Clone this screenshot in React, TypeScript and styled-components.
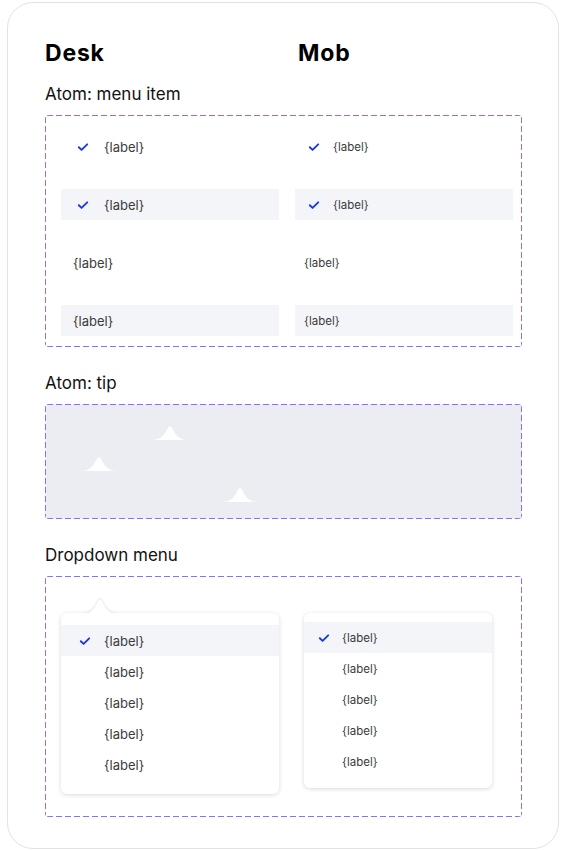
import React from "react";
import styled, { createGlobalStyle } from "styled-components";

const Global = createGlobalStyle`
  html, body { margin: 0; padding: 0; background: #ffffff; }
  body { font-family: Inter, "Open Sans", sans-serif; color: #111; }
`;

const DASH = "#8f6cff";
const dashed = `
  background-image:
    linear-gradient(90deg, ${DASH} 6px, transparent 6px),
    linear-gradient(90deg, ${DASH} 6px, transparent 6px),
    linear-gradient(180deg, ${DASH} 6px, transparent 6px),
    linear-gradient(180deg, ${DASH} 6px, transparent 6px);
  background-size: 9px 1px, 9px 1px, 1px 9px, 1px 9px;
  background-position: 2px 0, 2px 100%, 0 2px, 100% 2px;
  background-repeat: repeat-x, repeat-x, repeat-y, repeat-y;
`;

const Card = styled.div`
  box-sizing: border-box;
  margin: 2px 0 0 7px;
  width: 552px;
  height: 847px;
  border: 1px solid #e2e2ea;
  border-radius: 26px;
  padding: 37px 36px 0 37px;
  display: flex;
  flex-direction: column;
`;

const HeadRow = styled.div`
  display: grid;
  grid-template-columns: 253px 1fr;
  margin-bottom: 18px;
`;

const Heading = styled.h1`
  margin: 0;
  font-family: Inter, sans-serif;
  font-weight: 700;
  font-size: 23px;
  line-height: 26px;
  letter-spacing: 0.8px;
  color: #000;
`;

const Section = styled.section`
  display: flex;
  flex-direction: column;
  gap: 11px;
  margin-bottom: 26px;
`;

const SectionTitle = styled.h2`
  margin: 0;
  font-family: Inter, sans-serif;
  font-weight: 400;
  font-size: 17px;
  line-height: 20px;
  color: #111;
`;

const Frame = styled.div<{ $h: number; $fill?: string; $pad: string }>`
  position: relative;
  box-sizing: border-box;
  height: ${(p) => p.$h}px;
  border-radius: 4px;
  background-color: ${(p) => p.$fill || "transparent"};
  ${dashed}
  padding: ${(p) => p.$pad};
`;

const Columns = styled.div`
  display: grid;
  grid-template-columns: 218px 218px;
  column-gap: 16px;
  align-items: start;
`;

const Stack = styled.div`
  display: flex;
  flex-direction: column;
  gap: 27px;
`;

const Item = styled.div<{ $active?: boolean; $mob?: boolean; $check?: boolean }>`
  box-sizing: border-box;
  height: 31px;
  display: flex;
  align-items: center;
  padding-left: ${(p) => (p.$check ? (p.$mob ? 13 : 16) : p.$mob ? 9 : 12)}px;
  gap: ${(p) => (p.$mob ? 13 : 15)}px;
  background: ${(p) => (p.$active ? "#f4f5f9" : "transparent")};
  font-size: ${(p) => (p.$mob ? 11.5 : 13)}px;
  color: #3b3b3b;
  font-family: Inter, sans-serif;
`;

const CheckSvg = styled.svg`
  width: 12px;
  height: 10px;
  flex: none;
`;

const Check = () => (
  <CheckSvg viewBox="0 0 12 10">
    <polyline
      points="1.8,5.2 4.6,7.9 10.2,2.3"
      fill="none"
      stroke="#1b3bd6"
      strokeWidth="1.9"
      strokeLinecap="round"
      strokeLinejoin="round"
    />
  </CheckSvg>
);

const TipSvg = styled.svg<{ $x: number; $y: number }>`
  position: absolute;
  left: ${(p) => p.$x}px;
  top: ${(p) => p.$y}px;
  width: 36px;
  height: 16px;
`;

const TIP_PATH =
  "M0 16 C8 16 12 12 15.5 4.5 Q18 0 20.5 4.5 C24 12 28 16 36 16 Z";

const Tip = ({ x, y }: { x: number; y: number }) => (
  <TipSvg $x={x} $y={y} viewBox="0 0 36 16">
    <path d={TIP_PATH} fill="#ffffff" />
  </TipSvg>
);

const DropWrap = styled.div<{ $ml: number; $w: number }>`
  position: relative;
  margin-left: ${(p) => p.$ml}px;
  width: ${(p) => p.$w}px;
`;

const Drop = styled.div<{ $pt: number; $pb: number }>`
  position: relative;
  background: #fff;
  border-radius: 6px;
  box-shadow: 0 1px 4px rgba(20, 20, 40, 0.16);
  padding: ${(p) => p.$pt}px 0 ${(p) => p.$pb}px;
`;

const DropTipSvg = styled.svg`
  position: absolute;
  left: 21px;
  top: -16px;
  width: 36px;
  height: 17px;
  filter: drop-shadow(0 -1px 1px rgba(20, 20, 40, 0.12));
  z-index: 1;
`;

const DropTip = () => (
  <DropTipSvg viewBox="0 0 36 17">
    <path d="M0 17 C8 17 12 13 15.5 5 Q18 0.5 20.5 5 C24 13 28 17 36 17 Z" fill="#ffffff" />
  </DropTipSvg>
);

const DropItem = styled.div<{ $active?: boolean; $mob?: boolean }>`
  height: 31px;
  display: flex;
  align-items: center;
  padding-left: ${(p) => (p.$mob ? 14 : 18)}px;
  gap: ${(p) => (p.$mob ? 12 : 13)}px;
  background: ${(p) => (p.$active ? "#f4f5f9" : "transparent")};
  font-size: ${(p) => (p.$mob ? 11.5 : 13)}px;
  color: #3b3b3b;
`;

const Spacer = styled.span`
  width: 12px;
  flex: none;
`;

const DropTipCover = styled.div`
  position: absolute;
  left: 18px;
  top: 0;
  width: 42px;
  height: 4px;
  background: #fff;
  z-index: 2;
`;

const labels = [0, 1, 2, 3, 4];

export default function App() {
  return (
    <>
      <Global />
      <Card>
        <HeadRow>
          <Heading>Desk</Heading>
          <Heading>Mob</Heading>
        </HeadRow>

        <Section>
          <SectionTitle>Atom: menu item</SectionTitle>
          <Frame $h={232} $pad="16px 0 0 16px">
            <Columns>
              <Stack>
                <Item $check>
                  <Check />
                  {"{label}"}
                </Item>
                <Item $check $active>
                  <Check />
                  {"{label}"}
                </Item>
                <Item>{"{label}"}</Item>
                <Item $active>{"{label}"}</Item>
              </Stack>
              <Stack>
                <Item $check $mob>
                  <Check />
                  {"{label}"}
                </Item>
                <Item $check $mob $active>
                  <Check />
                  {"{label}"}
                </Item>
                <Item $mob>{"{label}"}</Item>
                <Item $mob $active>{"{label}"}</Item>
              </Stack>
            </Columns>
          </Frame>
        </Section>

        <Section>
          <SectionTitle>Atom: tip</SectionTitle>
          <Frame $h={115} $fill="#ebedf2" $pad="0">
            <Tip x={107} y={20} />
            <Tip x={36} y={51} />
            <Tip x={177} y={82} />
          </Frame>
        </Section>

        <Section>
          <SectionTitle>Dropdown menu</SectionTitle>
          <Frame $h={241} $pad="37px 0 0 16px">
            <Columns>
              <DropWrap $ml={0} $w={218}>
                <DropTip />
                <Drop $pt={12} $pb={14}>
                  <DropTipCover />
                  {labels.map((i) => (
                    <DropItem key={i} $active={i === 0}>
                      {i === 0 ? <Check /> : <Spacer />}
                      {"{label}"}
                    </DropItem>
                  ))}
                </Drop>
              </DropWrap>
              <DropWrap $ml={9} $w={188}>
                <Drop $pt={9} $pb={11}>
                  {labels.map((i) => (
                    <DropItem key={i} $mob $active={i === 0}>
                      {i === 0 ? <Check /> : <Spacer />}
                      {"{label}"}
                    </DropItem>
                  ))}
                </Drop>
              </DropWrap>
            </Columns>
          </Frame>
        </Section>
      </Card>
    </>
  );
}
